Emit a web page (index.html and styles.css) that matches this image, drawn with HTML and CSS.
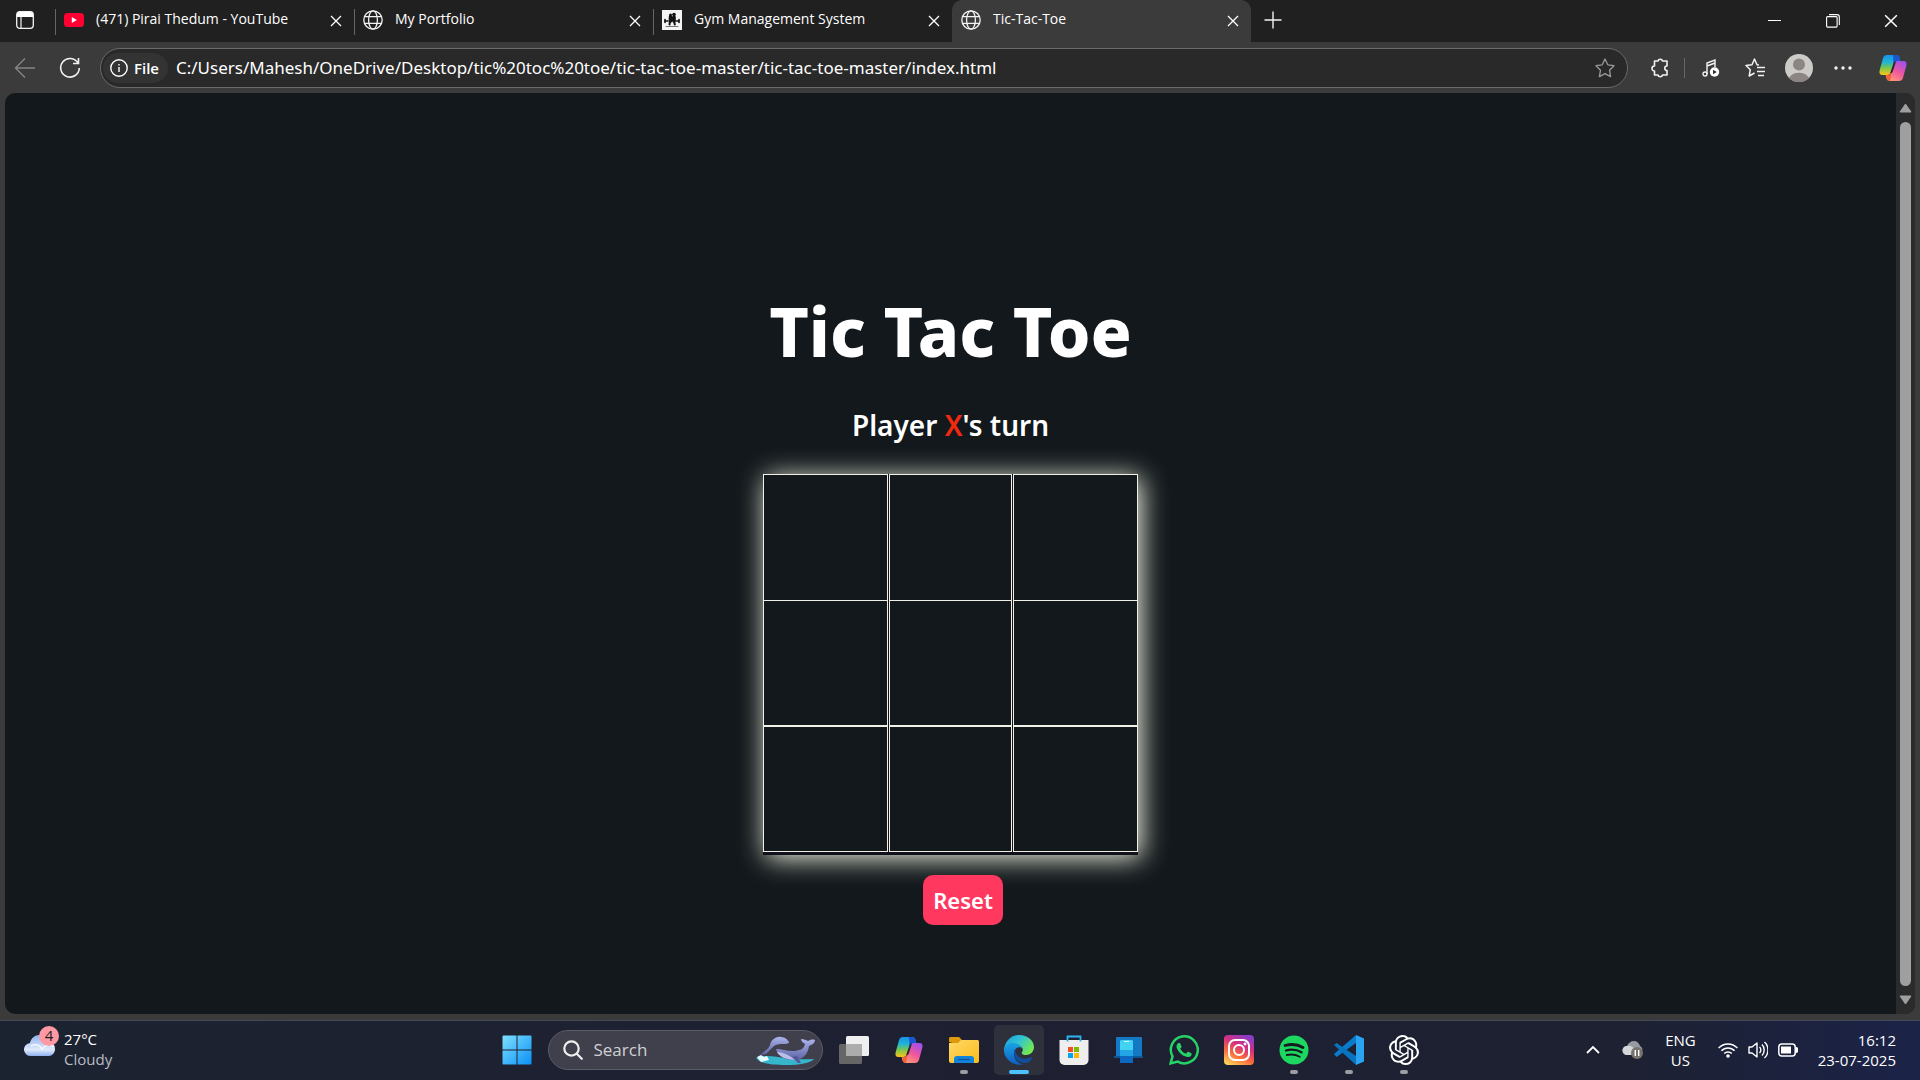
FILE: index.html
```html
<!DOCTYPE html>
<html lang="en">
<head>
<meta charset="utf-8">
<title>Tic-Tac-Toe</title>
<link rel="stylesheet" href="styles.css">
</head>
<body>
<svg class="defs" width="0" height="0" aria-hidden="true">
  <defs>
    <linearGradient id="copA" x1="0" y1="0" x2="0" y2="1"><stop offset="0" stop-color="#1793e8"/><stop offset=".35" stop-color="#1fb3d8"/><stop offset=".65" stop-color="#7cc84a"/><stop offset="1" stop-color="#ffc21a"/></linearGradient>
    <linearGradient id="copB" x1=".8" y1="0" x2=".2" y2="1"><stop offset="0" stop-color="#a050ee"/><stop offset=".5" stop-color="#f0569c"/><stop offset="1" stop-color="#ffa070"/></linearGradient>
    <linearGradient id="win" x1="0" y1="0" x2="1" y2="1"><stop offset="0" stop-color="#7fe0ff"/><stop offset="1" stop-color="#0a90f5"/></linearGradient>
    <linearGradient id="folder" x1="0" y1="0" x2="1" y2="1"><stop offset="0" stop-color="#ffd968"/><stop offset="1" stop-color="#fbbb1c"/></linearGradient>
    <linearGradient id="edgeA" x1="0" y1="0" x2="1" y2=".6"><stop offset="0" stop-color="#1c9ae0"/><stop offset=".5" stop-color="#30c4d4"/><stop offset="1" stop-color="#74e850"/></linearGradient>
    <linearGradient id="edgeB" x1="0" y1="0" x2="0" y2="1"><stop offset="0" stop-color="#1ba4e4"/><stop offset="1" stop-color="#0d5cc0"/></linearGradient>
    <linearGradient id="insta" x1=".2" y1="1" x2=".7" y2="0"><stop offset="0" stop-color="#ffd258"/><stop offset=".35" stop-color="#fa6a3c"/><stop offset=".65" stop-color="#d8307c"/><stop offset="1" stop-color="#8a3cc8"/></linearGradient>
    <linearGradient id="cloud" x1="0" y1="0" x2="0" y2="1"><stop offset="0" stop-color="#8fb2ee"/><stop offset=".7" stop-color="#dfeafc"/><stop offset="1" stop-color="#8db0ee"/></linearGradient>
    <linearGradient id="whale" x1="0" y1="0" x2="0" y2="1"><stop offset="0" stop-color="#aab4ea"/><stop offset="1" stop-color="#5e62a4"/></linearGradient>
    <symbol id="globe" viewBox="0 0 20 20"><g fill="none" stroke="#f2f2f2" stroke-width="1.3"><circle cx="10" cy="10" r="9.2"/><ellipse cx="10" cy="10" rx="4.4" ry="9.2"/><path d="M1.6 6.6h16.8M1.6 13.4h16.8"/></g></symbol>
    <symbol id="x" viewBox="0 0 12 12"><path d="M1 1l10 10M11 1L1 11" stroke="#fff" stroke-width="1.3" fill="none"/></symbol>
    <symbol id="copilot" viewBox="0 0 28 26"><path d="M8 0h9c2 0 3 1 3.600 3l.6 3h-3c-2 0-3 1-3.600 3l-2.600 8c-.6 2-2 3-4 3H3.500C.8 20 0 18 .6 15.500L4 3.200C4.700 1 6 0 8 0z" fill="url(#copA)"/><path d="M14 0h3c2 0 3 1 3.600 3l1 4h-3.600c-2 0-3 1-3.400 2.500z" fill="#1a56d0"/><path d="M20 26h-9c-2 0-3-1-3.600-3l-.8-3H9c2 0 3-1 3.600-3l2.600-8c.6-2 2-3 4-3h5.300c2.700 0 3.500 2 2.900 4.500L24 22.800c-.7 2.200-2 3.200-4 3.200z" fill="url(#copB)"/><path d="M7 20h2c2 0 3-1 3.600-3l.4-1-2 10c-2 0-3-1-3.600-3z" fill="#f0603c"/><path d="M11.200 18l3.400-10c.4-1 1-1.500 2.400-1.500l-3.200 10c-.4 1-1 1.500-2.600 1.500z" fill="#2a2634"/></symbol>
  </defs>
</svg>

<div class="window">
  <header class="tabbar">
    <button class="icon-btn workspaces" aria-label="Tab actions"><svg width="18" height="18" viewBox="0 0 18 18"><rect x=".7" y=".7" width="16.600" height="16.600" rx="3" fill="none" stroke="#f2f2f2" stroke-width="1.300"/><path d="M1 3a2 2 0 0 1 2-2h12a2 2 0 0 1 2 2v3H1z" fill="#fff"/><path d="M5 6v11" stroke="#f2f2f2" stroke-width="1.200"/></svg></button>
    <nav class="tabs" aria-label="Tabs">
      <div class="tab">
        <svg width="20" height="20" viewBox="0 0 20 20"><rect y="3" width="20" height="14" rx="3.500" fill="#ff0033"/><path d="M7.800 7v6l5-3z" fill="#fff"/></svg>
        <span class="tab-title">(471) Pirai Thedum - YouTube</span>
        <button class="tab-close" aria-label="Close tab"><svg width="12" height="12"><use href="#x"/></svg></button>
      </div>
      <div class="tab">
        <svg width="20" height="20"><use href="#globe"/></svg>
        <span class="tab-title">My Portfolio</span>
        <button class="tab-close" aria-label="Close tab"><svg width="12" height="12"><use href="#x"/></svg></button>
      </div>
      <div class="tab">
        <svg width="20" height="20" viewBox="0 0 20 20"><path d="M0 0h20v20H0z" fill="#f4f4f4"/><g fill="none" stroke="#111" stroke-linecap="round"><path d="M8.500 7v4M12 7v4" stroke-width="3.600"/><path d="M8 11l-.5 3.500M12 11l.8 3.500" stroke-width="2"/><path d="M6 11H3M14 11h3" stroke-width="1.400"/><path d="M3 9.500v3M17 9.500v3" stroke-width="1.600"/><path d="M4 16.500h12" stroke="#777" stroke-width="1"/></g><circle cx="8.500" cy="5" r="1.500" fill="#111"/><circle cx="12" cy="4.500" r="1.800" fill="#111"/></svg>
        <span class="tab-title">Gym Management System</span>
        <button class="tab-close" aria-label="Close tab"><svg width="12" height="12"><use href="#x"/></svg></button>
      </div>
      <div class="tab active">
        <svg width="20" height="20"><use href="#globe"/></svg>
        <span class="tab-title">Tic-Tac-Toe</span>
        <button class="tab-close" aria-label="Close tab"><svg width="12" height="12"><use href="#x"/></svg></button>
      </div>
    </nav>
    <button class="icon-btn new-tab" aria-label="New tab"><svg width="18" height="18" viewBox="0 0 18 18"><path d="M9 .5v17M.5 9h17" stroke="#f2f2f2" stroke-width="1.400"/></svg></button>
    <div class="window-controls">
      <button class="icon-btn" aria-label="Minimize"><svg width="14" height="14"><path d="M0 6.500h13" stroke="#fff"/></svg></button>
      <button class="icon-btn" aria-label="Restore"><svg width="14" height="14" viewBox="0 0 14 14" fill="none" stroke="#fff" stroke-width="1.100"><rect x=".6" y="2.600" width="10.500" height="10.500" rx="1"/><path d="M3 .6h8a2.300 2.300 0 0 1 2.300 2.300V11"/></svg></button>
      <button class="icon-btn" aria-label="Close"><svg width="14" height="14" viewBox="0 0 12 12"><use href="#x"/></svg></button>
    </div>
  </header>

  <div class="toolbar">
    <button class="icon-btn" aria-label="Back"><svg width="22" height="22" viewBox="0 0 22 22" fill="none" stroke="#858585" stroke-width="1.400"><path d="M21 11H1.500M11 1.500L1.500 11l9.500 9.500"/></svg></button>
    <button class="icon-btn" aria-label="Reload"><svg width="22" height="22" viewBox="0 0 22 22" fill="none" stroke="#f2f2f2" stroke-width="1.600"><path d="M19 6a9.300 9.300 0 1 0 1.300 5M19.500 1v5.500H14"/></svg></button>
    <div class="address">
      <button class="file-chip"><svg width="18" height="18" viewBox="0 0 18 18"><circle cx="9" cy="9" r="8.200" fill="none" stroke="#fff" stroke-width="1.400"/><path d="M9 8v5M9 5v1.500" stroke="#fff" stroke-width="1.400"/></svg>File</button>
      <input class="url" type="text" aria-label="Address" value="C:/Users/Mahesh/OneDrive/Desktop/tic%20toc%20toe/tic-tac-toe-master/tic-tac-toe-master/index.html">
      <button class="icon-btn" aria-label="Add to favorites"><svg width="20" height="20" viewBox="0 0 20 20"><path d="M10 1l2.800 5.800 6.200.9-4.500 4.500 1.100 6.400L10 15.600l-5.600 3 1.100-6.400L1 7.700l6.200-.9z" fill="none" stroke="#999" stroke-width="1.300" stroke-linejoin="round"/></svg></button>
    </div>
    <div class="tools">
      <button class="icon-btn" aria-label="Extensions"><svg width="20" height="20" viewBox="0 0 20 20"><path d="M5 3h3a2.300 2.300 0 0 1 4.500 0H17v5a2 2 0 0 0 0 4.500V17h-4.500a2.300 2.300 0 0 1-4.500 0H4.500v-4a2.500 2.500 0 1 1 0-5V3z" fill="none" stroke="#f2f2f2" stroke-width="1.600" stroke-linejoin="round"/></svg></button>
      <span class="divider"></span>
      <button class="icon-btn" aria-label="Media"><svg width="18" height="18" viewBox="0 0 18 18" fill="none" stroke="#f2f2f2" stroke-width="1.400"><path d="M5 15V4l8-3v7M5 7l8-3"/><circle cx="3" cy="15" r="2"/><circle cx="12.500" cy="13" r="4.700" fill="#fff" stroke="none"/><path d="M11 10.800v4.400l3.800-2.200z" fill="#333" stroke="none"/></svg></button>
      <button class="icon-btn" aria-label="Favorites"><svg width="20" height="20" viewBox="0 0 20 20" fill="none" stroke="#f2f2f2" stroke-width="1.500"><path d="M14 7l-2-.3L9.500 1 7 6.700l-6 .8 4.300 4.200L4.200 18l5.300-3" stroke-linejoin="round"/><path d="M12 9.500h8M12 13.500h8M13 17.500h6"/></svg></button>
      <button class="icon-btn" aria-label="Profile"><svg width="28" height="28" viewBox="0 0 28 28"><circle cx="14" cy="14" r="14" fill="#cdcbc8"/><circle cx="14" cy="10.500" r="6" fill="#8b8683"/><path d="M4 24a11 9 0 0 1 20 0 14 14 0 0 1-20 0z" fill="#8b8683"/></svg></button>
      <button class="icon-btn" aria-label="Settings and more"><svg width="18" height="4" fill="#f2f2f2"><circle cx="2" cy="2" r="1.700"/><circle cx="9" cy="2" r="1.700"/><circle cx="16" cy="2" r="1.700"/></svg></button>
      <button class="icon-btn copilot" aria-label="Copilot"><svg width="28" height="26"><use href="#copilot"/></svg></button>
    </div>
  </div>

  <div class="viewport">
    <main class="game">
      <h1>Tic Tac Toe</h1>
      <p class="status">Player <span class="player-x">X</span>'s turn</p>
      <div class="board">
        <button class="cell top" aria-label="Cell 1"></button><button class="cell top" aria-label="Cell 2"></button><button class="cell top" aria-label="Cell 3"></button>
        <button class="cell" aria-label="Cell 4"></button><button class="cell" aria-label="Cell 5"></button><button class="cell" aria-label="Cell 6"></button>
        <button class="cell" aria-label="Cell 7"></button><button class="cell" aria-label="Cell 8"></button><button class="cell" aria-label="Cell 9"></button>
      </div>
      <button class="reset">Reset</button>
    </main>
    <div class="scrollbar" aria-hidden="true">
      <svg width="13" height="10"><path d="M6.500 1L12 9H1z" fill="#9f9f9f" stroke="#9f9f9f" stroke-linejoin="round"/></svg>
      <span class="thumb"></span>
      <svg width="13" height="10"><path d="M6.500 9L12 1H1z" fill="#9f9f9f" stroke="#9f9f9f" stroke-linejoin="round"/></svg>
    </div>
  </div>
</div>

<footer class="taskbar">
  <button class="weather">
    <svg width="36" height="32" viewBox="0 0 36 32"><path d="M7 30a6.500 6.500 0 0 1-1-13c1-5 5-8 9-8 5 0 8 3 9 7 5 0 7 3 7 7s-3 7-6 7z" fill="url(#cloud)"/><path d="M7 20c5-3 9-1 11 3 3-4 8-5 12-2" fill="none" stroke="#f6faff" stroke-width="1.500"/><circle cx="25" cy="10" r="10" fill="#ff99a4"/><text x="25" y="15" text-anchor="middle" class="badge">4</text></svg>
    <span class="weather-text"><span>27°C</span><span class="muted">Cloudy</span></span>
  </button>
  <div class="apps">
    <button class="app start" aria-label="Start"><svg width="30" height="30" viewBox="0 0 30 30"><path d="M1.500.5H14.500V14.500H.5V1.500a1 1 0 0 1 1-1zM15.500.5h13a1 1 0 0 1 1 1v13h-14zM.5 15.500h14v14h-13a1 1 0 0 1-1-1zM15.500 15.500h14v13a1 1 0 0 1-1 1h-13z" fill="url(#win)"/></svg></button>
    <label class="search">
      <svg width="20" height="20" viewBox="0 0 20 20" fill="none" stroke="#eee" stroke-width="2.200" stroke-linecap="round"><circle cx="8.500" cy="8.500" r="7.200"/><path d="M14 14l4.800 4.800"/></svg>
      <input type="text" placeholder="Search" aria-label="Search">
      <svg width="60" height="30" viewBox="0 0 60 30"><path d="M0 23c8-4 20-1 30 0 9 2 18 1 28 1-4 4-14 6-28 6-14 0-26-1-30-7z" fill="#35b6cd"/><path d="M1 22l4-2 3 2 3-1 2 4-8 2z" fill="#e8fbff"/><path d="M14 10c1-5 6-9 11-8 4 0 7 3 8 5 1 1-2 2-5 2-4 0-9 0-12 4-2 2-4 4-6 6l-6 1 5-4c2-2 4-3 5-6z" fill="url(#whale)"/><path d="M20 14c6 0 10 2 16 2 8 0 12-2 13-7-2-1-4-3-4-5 3 0 5 1 7 2 2-1 4-2 7-1 0 3-3 5-6 6-1 8-6 14-15 14-8 0-16-3-18-11z" fill="url(#whale)"/><path d="M21 17c5 0 10 2 19 8-8 0-17-3-19-8z" fill="#b9bfe9"/><path d="M36 22l6 6h3l-4-7z" fill="#54589a"/></svg>
    </label>
    <button class="app" aria-label="Task view"><svg width="30" height="30" viewBox="0 0 30 30"><rect x="7" y="1" width="23" height="20" rx="1.500" fill="#efefef"/><rect x="0" y="9" width="23" height="20" rx="1.500" fill="#666"/><path d="M7 9h16v12H7z" fill="#acacac"/></svg></button>
    <button class="app" aria-label="Copilot"><svg width="28" height="26"><use href="#copilot"/></svg></button>
    <button class="app running" aria-label="File Explorer"><svg width="30" height="28" viewBox="0 0 30 28"><path d="M0 6V2.500A1.500 1.500 0 0 1 1.500 1H10l3 3-3 5z" fill="#dd9a0c"/><path d="M0 7h9l3-3h16.500A1.500 1.500 0 0 1 30 5.500V25a2 2 0 0 1-2 2H2a2 2 0 0 1-2-2z" fill="url(#folder)"/><path d="M5 27v-4a3 3 0 0 1 3-3h14a3 3 0 0 1 3 3v4z" fill="#1283da"/><path d="M9 23.500h12" stroke="#0b58a0" stroke-width="1.300"/></svg></button>
    <button class="app running current" aria-label="Microsoft Edge"><svg width="30" height="30" viewBox="0 0 30 30"><path d="M0 15C1 6 7 0 15 0c9 0 15 6 15 12 0 5-4 8-8 8-3 0-5-1-4-3 2-3 0-6-4-6C8 11 3 13 0 17z" fill="url(#edgeA)"/><path d="M0 15c1-5 6-8 10-7 4 0 7 2 8 5-4-2-8 1-8 6 0 6 5 11 11 10-9 3-21-3-21-14z" fill="url(#edgeB)"/><path d="M11 14c-3 7 2 14 10 14 3 0 6-2 7-5 0-1-1-1-2-.5-6 3-14 1-15-8.500z" fill="#114f9e"/></svg></button>
    <button class="app" aria-label="Microsoft Store"><svg width="30" height="30" viewBox="0 0 30 30"><path d="M.5 5h29v20a5 5 0 0 1-5 5h-19a5 5 0 0 1-5-5z" fill="#eee"/><path d="M9 12h5v5H9z" fill="#f25022"/><path d="M15 12h5v5h-5z" fill="#7fba00"/><path d="M9 18h5v5H9z" fill="#00a4ef"/><path d="M15 18h5v5h-5z" fill="#ffb900"/><path d="M8.500 6.500V1.500h13v5" fill="none" stroke="#2cb4f0" stroke-width="1.800"/></svg></button>
    <button class="app" aria-label="Phone Link"><svg width="30" height="28" viewBox="0 0 30 28"><path d="M2 2a1 1 0 0 1 1-1h24a1 1 0 0 1 1 1v18H2z" fill="#1379c4"/><path d="M0 20h29v1a1 1 0 0 1-1 1H1a1 1 0 0 1-1-1z" fill="#0c5694"/><rect x="6" y="4" width="13" height="23" rx="1.500" fill="#23a6e6"/><path d="M6 5.500A1.500 1.500 0 0 1 7.500 4h10A1.500 1.500 0 0 1 19 5.500V14H6z" fill="#42d2f2"/><path d="M6 20h13v5.500a1.500 1.500 0 0 1-1.500 1.500h-10A1.500 1.500 0 0 1 6 25.500z" fill="#0c68c0"/><path d="M10 5.500h5" stroke="#d5f7ff"/></svg></button>
    <button class="app" aria-label="WhatsApp"><svg width="30" height="30" viewBox="0 0 24 24" fill="#25d366"><path d="M17.472 14.382c-.297-.149-1.758-.867-2.030-.967-.273-.099-.471-.148-.670.150-.197.297-.767.966-.940 1.164-.173.199-.347.223-.644.075-.297-.150-1.255-.463-2.390-1.475-.883-.788-1.480-1.761-1.653-2.059-.173-.297-.018-.458.130-.606.134-.133.298-.347.446-.520.149-.174.198-.298.298-.497.099-.198.050-.371-.025-.520-.075-.149-.669-1.612-.916-2.207-.242-.579-.487-.500-.669-.510-.173-.008-.371-.010-.570-.010-.198 0-.520.074-.792.372-.272.297-1.040 1.016-1.040 2.479 0 1.462 1.065 2.875 1.213 3.074.149.198 2.096 3.200 5.077 4.487.709.306 1.262.489 1.694.625.712.227 1.360.195 1.871.118.571-.085 1.758-.719 2.006-1.413.248-.694.248-1.289.173-1.413-.074-.124-.272-.198-.570-.347z"/><path d="M1.300 22.700l1.500-5.600A10.800 10.800 0 1 1 7 21.300z" fill="none" stroke="#25d366" stroke-width="2"/></svg></button>
    <button class="app" aria-label="Instagram"><svg width="30" height="30" viewBox="0 0 30 30"><rect width="30" height="30" rx="4" fill="url(#insta)"/><g fill="none" stroke="#fff" stroke-width="2"><rect x="5" y="5" width="20" height="20" rx="6"/><circle cx="15" cy="15" r="5"/></g><circle cx="21" cy="9" r="1.400" fill="#fff"/></svg></button>
    <button class="app running" aria-label="Spotify"><svg width="30" height="30" viewBox="0 0 30 30"><circle cx="15" cy="15" r="14.500" fill="#1ed760"/><g fill="none" stroke="#141a20" stroke-linecap="round"><path d="M6 10.500c6-1.600 13-1 18 2" stroke-width="2.800"/><path d="M7 15.500c5-1.400 11-.8 15.500 1.800" stroke-width="2.300"/><path d="M7.700 20c4.500-1 9-.6 13 1.700" stroke-width="1.900"/></g></svg></button>
    <button class="app running" aria-label="Visual Studio Code"><svg width="30" height="30" viewBox="0 0 30 30"><path d="M22 0L0 19l2.500 3L22 8z" fill="#0a7ccc"/><path d="M2.500 8L0 10l22 20V21z" fill="#0874c0"/><path d="M22 0l8 3.500v23L22 30z" fill="#2aa4f0"/></svg></button>
    <button class="app running" aria-label="ChatGPT"><svg width="30" height="30" viewBox="0 0 24 24" fill="#fff"><path d="M22.282 9.821a5.985 5.985 0 0 0-.516-4.911 6.046 6.046 0 0 0-6.510-2.900A6.065 6.065 0 0 0 4.981 4.182a5.985 5.985 0 0 0-3.998 2.900 6.046 6.046 0 0 0 .743 7.097 5.980 5.980 0 0 0 .511 4.911 6.051 6.051 0 0 0 6.515 2.900A5.985 5.985 0 0 0 13.260 24a6.056 6.056 0 0 0 5.772-4.206 5.990 5.990 0 0 0 3.998-2.900 6.056 6.056 0 0 0-.747-7.073zM13.260 22.430a4.476 4.476 0 0 1-2.876-1.041l.142-.080 4.778-2.758a.795.795 0 0 0 .393-.681v-6.737l2.020 1.169a.071.071 0 0 1 .038.052v5.583a4.504 4.504 0 0 1-4.495 4.494zM3.600 18.304a4.471 4.471 0 0 1-.535-3.014l.142.085 4.783 2.758a.771.771 0 0 0 .781 0l5.843-3.369v2.332a.080.080 0 0 1-.033.062L9.740 19.950a4.500 4.500 0 0 1-6.140-1.646zM2.341 7.896a4.485 4.485 0 0 1 2.365-1.973V11.600a.766.766 0 0 0 .388.677l5.814 3.354-2.020 1.169a.076.076 0 0 1-.071 0l-4.830-2.787A4.504 4.504 0 0 1 2.341 7.872zm16.596 3.856l-5.833-3.388L15.119 7.200a.076.076 0 0 1 .071 0l4.830 2.791a4.494 4.494 0 0 1-.676 8.105v-5.678a.790.790 0 0 0-.407-.667zm2.010-3.023l-.141-.085-4.774-2.782a.776.776 0 0 0-.785 0L9.409 9.230V6.897a.066.066 0 0 1 .028-.061l4.830-2.787a4.499 4.499 0 0 1 6.680 4.660zM8.307 12.863l-2.020-1.164a.080.080 0 0 1-.038-.057V6.074a4.499 4.499 0 0 1 7.376-3.453l-.142.080L8.704 5.459a.795.795 0 0 0-.393.681zm1.097-2.365l2.602-1.500 2.607 1.500v2.999l-2.597 1.500-2.607-1.500z"/></svg></button>
  </div>
  <div class="tray">
    <button class="icon-btn" aria-label="Show hidden icons"><svg width="14" height="9" viewBox="0 0 14 9"><path d="M1 8l6-6 6 6" fill="none" stroke="#fff" stroke-width="1.800"/></svg></button>
    <button class="icon-btn onedrive" aria-label="OneDrive"><svg width="22" height="18" viewBox="0 0 22 18"><path d="M5 14a4.500 4.500 0 0 1 0-9c1-3 4-5 7-5s5 2 6 5c2 1 3 3 2 5l-9 4z" fill="#989ba2"/><path d="M5 14a4.500 4.500 0 0 1 0-9c4-1 6 1 8 4l2 5z" fill="#d4d6da"/><circle cx="15" cy="12" r="6" fill="#77736e"/><path d="M13.300 9v6M16.700 9v6" stroke="#fff" stroke-width="1.400"/></svg></button>
    <button class="lang"><span>ENG</span><span>US</span></button>
    <button class="status-icons" aria-label="Network, volume and battery">
      <svg width="20" height="16" viewBox="0 0 20 16" fill="none" stroke="#fff" stroke-width="1.500"><path d="M.6 6a13 13 0 0 1 18.800 0M3.400 8.800a9 9 0 0 1 13.200 0M6.200 11.600a5.300 5.300 0 0 1 7.600 0"/><circle cx="10" cy="14" r="1.800" fill="#fff" stroke="none"/></svg>
      <svg width="20" height="18" viewBox="0 0 20 18" fill="none" stroke="#fff" stroke-width="1.400"><path d="M1 6h3l5-4v14l-5-4H1z" stroke-linejoin="round"/><path d="M11.500 6a4 4 0 0 1 0 6M14 3.500a8 8 0 0 1 0 11M16.500 1a11 11 0 0 1 0 16"/></svg>
      <svg width="20" height="14" viewBox="0 0 20 14"><rect x=".8" y="1" width="16.400" height="12" rx="3" fill="none" stroke="#fff" stroke-width="1.500"/><path d="M3 3.500h10v7H3z" fill="#fff"/><path d="M18 4.500a2.500 2.500 0 0 1 0 5z" fill="#fff" stroke="#fff"/></svg>
    </button>
    <button class="clock"><span>16:12</span><span>23-07-2025</span></button>
  </div>
</footer>
</body>
</html>
```
FILE: styles.css
```css
* { box-sizing: border-box; }

body {
  margin: 0;
  min-height: 100vh;
  display: flex;
  flex-direction: column;
  background: #3b3b3b;
  color: #fff;
  font-family: "Open Sans", "Noto Sans", sans-serif;
}

button, input {
  margin: 0;
  padding: 0;
  border: 0;
  background: none;
  color: inherit;
  font: inherit;
}

svg { display: block; flex: none; }
.defs { position: absolute; }

.window { flex: 1; display: flex; flex-direction: column; }

.icon-btn { display: flex; align-items: center; justify-content: center; flex: none; }

/* Tab strip */
.tabbar { display: flex; height: 42px; background: #202020; }
.workspaces { width: 50px; height: 40px; }
.tabs { display: flex; flex: 0 1 1201px; padding-left: 5px; }
.tab {
  flex: 1;
  display: flex;
  align-items: center;
  min-width: 0;
  height: 42px;
  padding: 0 12px 2px 9px;
  font-size: 14px;
  line-height: 20px;
  background: linear-gradient(#666, #666) 0 9px / 1px 26px no-repeat;
}
.tab.active { background: #3b3b3b; border-radius: 10px 10px 0 0; }
.tab-title { flex: 1; margin-left: 12px; padding-bottom: 2px; white-space: nowrap; overflow: hidden; }
.tab-close { flex: none; padding: 2px 0 0; }
.new-tab { width: 44px; height: 40px; }
.window-controls { display: flex; margin-left: auto; }
.window-controls .icon-btn { width: 58px; height: 42px; }

/* Toolbar */
.toolbar { display: flex; align-items: center; height: 51px; padding-left: 14px; }
.toolbar > .icon-btn { width: 22px; margin-right: 23px; }
.toolbar > .icon-btn + .icon-btn { margin-right: 19px; }
.address {
  flex: 1;
  display: flex;
  align-items: center;
  height: 40px;
  padding: 0 12px 0 2px;
  border: 1px solid #6a6a6a;
  border-radius: 20px;
  background: #292929;
}
.file-chip {
  display: flex;
  align-items: center;
  gap: 6px;
  height: 30px;
  padding: 0 9px 0 7px;
  border-radius: 15px;
  background: #333;
  font-size: 15px;
  font-weight: 600;
}
.url { flex: 1; min-width: 0; margin-left: 8px; font-family: "Noto Sans", sans-serif; font-size: 17px; outline: 0; }
.tools { display: flex; align-items: center; padding: 0 5px 0 10px; }
.tools .icon-btn { width: 44px; }
.tools .copilot { margin-left: 6px; }
.divider { width: 1px; height: 20px; margin: 0 4px 0 2px; background: #666; }

/* Page */
.viewport {
  flex: 1;
  display: flex;
  margin: 0 5px 6px;
  border-radius: 10px;
  overflow: hidden;
  background: #12181b;
}
.game { flex: 1; display: flex; flex-direction: column; align-items: center; padding-top: 188px; }
h1 {
  margin: 0;
  font: 800 68px/100px "Noto Sans", sans-serif;
}
.status { margin: 22px 0 0; font: 600 28px/44px "Noto Sans", sans-serif; }
.player-x { color: #f02a10; }
.board {
  display: grid;
  grid-template-columns: 125px 123px 125px;
  grid-auto-rows: 126px;
  column-gap: 1px;
  margin-top: 27px;
  padding-bottom: 3px;
  background: #12121e;
  box-shadow: 3px 3px 25px #f4f8e8;
}
.cell { border: 1px solid #f0f0e6; background: #12181b; }
.cell.top { border-bottom: 0; }
.reset {
  width: 80px;
  height: 50px;
  margin: 20px 0 0 25px;
  border-radius: 10px;
  background: #ff3860;
  font: 600 22px/50px "Noto Sans", sans-serif;
}

.scrollbar {
  display: flex;
  flex-direction: column;
  align-items: center;
  gap: 9px;
  width: 19px;
  padding: 10px 0 9px;
  background: #2b2b2b;
}
.thumb { flex: 1; width: 11px; border-radius: 6px; background: #9f9f9f; }

/* Taskbar */
.taskbar {
  display: grid;
  grid-template-columns: 1fr auto 1fr;
  height: 60px;
  padding-bottom: 2px;
  border-top: 1px solid #454955;
  background: linear-gradient(90deg, #1c2330, #1e2032 50%, #1d2132 85%, #1b2348);
}
.weather { display: flex; align-items: flex-start; padding: 5px 0 0 24px; text-align: left; }
.badge { font: 15px "Open Sans", sans-serif; fill: #222; }
.weather-text { display: flex; flex-direction: column; margin-left: 4px; font-size: 15px; line-height: 20px; padding-top: 3px; }
.muted { color: #b9bcc4; }

.apps { display: flex; align-items: center; gap: 5px; }
.app {
  display: flex;
  align-items: center;
  justify-content: center;
  width: 50px;
  height: 50px;
  border-radius: 5px;
  position: relative;
}
.search {
  display: flex;
  align-items: center;
  width: 275px;
  height: 40px;
  margin: 0 1px;
  padding: 0 6px 0 14px;
  border: 1px solid #5b5c68;
  border-radius: 20px;
  background: #40404c;
}
.search input { flex: 1; min-width: 0; margin-left: 11px; font-size: 17px; outline: 0; }
.search input::placeholder { color: #d0d0d4; opacity: 1; }
.running::after {
  content: "";
  position: absolute;
  bottom: 1px;
  width: 8px;
  height: 4px;
  border-radius: 2px;
  background: #9c9da4;
}
.current { background: #2e303c; }
.current::after { width: 20px; background: #4cc2ff; }

.tray { display: flex; align-items: center; justify-content: flex-end; padding-right: 24px; font-size: 15px; line-height: 20px; }
.onedrive { margin: 0 21px 0 22px; }
.lang, .clock { display: flex; flex-direction: column; }
.lang { align-items: center; }
.status-icons { display: flex; align-items: center; gap: 10px; margin: 0 20px 0 22px; }
.clock { align-items: flex-end; }
```
